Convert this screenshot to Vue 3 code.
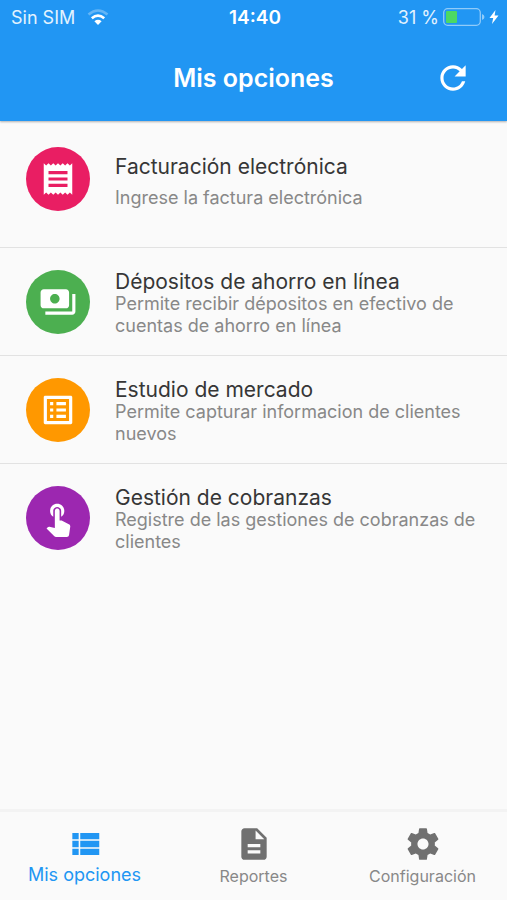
<script setup>
import { ref } from 'vue'

const options = [
  {
    title: 'Facturación electrónica',
    text: 'Ingrese la factura electrónica',
    tone: 'pink',
    roomy: true,
    path: 'M18 17H6v-2h12v2zm0-4H6v-2h12v2zm0-4H6V7h12v2zM3 22l1.5-1.5L6 22l1.5-1.5L9 22l1.5-1.5L12 22l1.5-1.5L15 22l1.5-1.5L18 22l1.5-1.5L21 22V2l-1.500 1.500L18 2l-1.500 1.500L15 2l-1.500 1.500L12 2l-1.500 1.500L9 2 7.500 3.500 6 2 4.500 3.500 3 2v20z'
  },
  {
    title: 'Dépositos de ahorro en línea',
    text: 'Permite recibir dépositos en efectivo de cuentas de ahorro en línea',
    tone: 'green',
    path: 'M19 14V6c0-1.100-.900-2-2-2H3c-1.100 0-2 .900-2 2v8c0 1.100.900 2 2 2h14c1.100 0 2-.900 2-2zm-9-1c-1.660 0-3-1.340-3-3s1.340-3 3-3 3 1.340 3 3-1.340 3-3 3zm13-6v11c0 1.100-.900 2-2 2H4v-2h17V7h2z'
  },
  {
    title: 'Estudio de mercado',
    text: 'Permite capturar informacion de clientes nuevos',
    tone: 'orange',
    path: 'M19 5v14H5V5h14m1.100-2H3.900c-.5 0-.9.400-.9.900v16.200c0 .400.400.900.900.900h16.200c.400 0 .900-.500.900-.900V3.900c0-.500-.500-.900-.900-.900zM11 7h6v2h-6V7zm0 4h6v2h-6v-2zm0 4h6v2h-6zM7 7h2v2H7zm0 4h2v2H7zm0 4h2v2H7z'
  },
  {
    title: 'Gestión de cobranzas',
    text: 'Registre de las gestiones de cobranzas de clientes',
    tone: 'purple',
    path: 'M9 11.240V7.500C9 6.120 10.120 5 11.500 5S14 6.120 14 7.500v3.740c1.210-.810 2-2.180 2-3.740C16 5.010 13.990 3 11.500 3S7 5.010 7 7.500c0 1.560.790 2.930 2 3.740zm9.840 4.630l-4.540-2.260c-.170-.070-.350-.110-.540-.110H13v-6c0-.830-.670-1.500-1.500-1.500S10 6.670 10 7.500v10.740l-3.430-.720c-.080-.010-.150-.030-.240-.030-.310 0-.590.130-.790.330l-.790.800 4.940 4.940c.270.270.650.440 1.060.440h6.790c.750 0 1.330-.550 1.440-1.280l.750-5.270c.010-.070.020-.140.020-.200 0-.620-.380-1.160-.910-1.380z'
  }
]

const tabs = [
  { label: 'Mis opciones', path: 'M4 14h4v-4H4v4zm0 5h4v-4H4v4zM4 9h4V5H4v4zm5 5h12v-4H9v4zm0 5h12v-4H9v4zM9 5v4h12V5H9z' },
  { label: 'Reportes', path: 'M14 2H6c-1.100 0-1.990.900-1.990 2L4 20c0 1.100.890 2 1.990 2H18c1.100 0 2-.900 2-2V8l-6-6zm2 16H8v-2h8v2zm0-4H8v-2h8v2zm-3-5V3.500L18.500 9H13z' },
  { label: 'Configuración', path: 'M19.430 12.980c.040-.320.070-.640.070-.980s-.030-.660-.070-.980l2.110-1.650c.190-.150.240-.420.120-.640l-2-3.460c-.120-.220-.390-.300-.610-.220l-2.490 1c-.520-.400-1.080-.730-1.690-.980l-.380-2.650C14.460 2.180 14.250 2 14 2h-4c-.250 0-.460.180-.490.420l-.380 2.650c-.610.250-1.170.590-1.690.980l-2.490-1c-.230-.090-.490 0-.610.220l-2 3.460c-.130.220-.070.490.120.640l2.110 1.650c-.040.320-.070.650-.070.980s.030.660.070.980l-2.110 1.650c-.190.150-.240.420-.120.640l2 3.460c.120.220.390.300.610.220l2.490-1c.520.400 1.080.730 1.690.980l.380 2.650c.030.240.240.420.490.420h4c.250 0 .460-.180.490-.420l.380-2.650c.610-.250 1.170-.590 1.690-.980l2.490 1c.230.090.490 0 .610-.220l2-3.460c.120-.220.070-.490-.120-.640l-2.110-1.650zM12 15.500c-1.930 0-3.500-1.570-3.500-3.500s1.570-3.500 3.500-3.500 3.500 1.570 3.500 3.500-1.570 3.500-3.500 3.500z' }
]

const active = ref(0)
</script>

<template>
  <div class="app">
    <header class="top">
      <div class="status">
        <div class="carrier">
          <span>Sin SIM</span>
          <svg class="wifi" viewBox="0 0 22 17" aria-hidden="true">
            <path d="M1.500 5.500Q11-2.500 20.500 5.500" fill="none" stroke="#fff" stroke-width="2.600" opacity=".3" />
            <path d="M4.800 9.200Q11 4 17.200 9.200" fill="none" stroke="#fff" stroke-width="2.700" />
            <path d="M7.400 12.200Q11 9.400 14.600 12.200L11 16z" fill="#fff" />
          </svg>
        </div>
        <span class="clock">14:40</span>
        <div class="power">
          <span>31 %</span>
          <svg class="battery" viewBox="0 0 42 18" aria-hidden="true">
            <rect x=".7" y=".7" width="36.600" height="16.600" rx="4" fill="none" stroke="#fff" stroke-width="1.300" opacity=".5" />
            <rect x="3" y="3" width="11" height="12" rx="1" fill="#4cd964" />
            <path d="M39 6q2.500 1 2.500 3T39 12z" fill="#fff" opacity=".5" />
          </svg>
          <svg class="bolt" viewBox="0 0 10 16" aria-hidden="true">
            <path d="M6.500 1L.5 9h3.700L3 15l6.500-8.500H5.600z" fill="#fff" />
          </svg>
        </div>
      </div>
      <div class="bar">
        <h1>Mis opciones</h1>
        <button class="refresh" type="button" aria-label="Actualizar">
          <svg class="icon" viewBox="0 0 24 24" aria-hidden="true">
            <path d="M17.650 6.350C16.200 4.900 14.210 4 12 4c-4.420 0-7.990 3.580-7.990 8s3.570 8 7.990 8c3.730 0 6.840-2.550 7.730-6h-2.080c-.820 2.330-3.040 4-5.650 4-3.310 0-6-2.690-6-6s2.690-6 6-6c1.660 0 3.140.690 4.220 1.780L13 11h7V4l-2.350 2.350z" />
          </svg>
        </button>
      </div>
    </header>

    <main>
      <ul class="list">
        <li v-for="item in options" :key="item.title">
          <a href="#" class="row" :class="{ roomy: item.roomy }" @click.prevent>
            <span class="badge" :class="item.tone">
              <svg class="icon" viewBox="0 0 24 24" aria-hidden="true"><path :d="item.path" /></svg>
            </span>
            <span class="copy">
              <span class="title">{{ item.title }}</span>
              <span class="text">{{ item.text }}</span>
            </span>
          </a>
        </li>
      </ul>
    </main>

    <nav class="tabs">
      <button
        v-for="(tab, i) in tabs"
        :key="tab.label"
        type="button"
        class="tab"
        :class="{ active: active === i }"
        @click="active = i"
      >
        <svg class="icon" viewBox="0 0 24 24" aria-hidden="true"><path :d="tab.path" /></svg>
        <span>{{ tab.label }}</span>
      </button>
    </nav>
  </div>
</template>

<style>
body {
  margin: 0;
  background: #fafafa;
}
</style>

<style scoped>
.app {
  display: flex;
  flex-direction: column;
  min-height: 100vh;
  font-family: Inter, "Liberation Sans", sans-serif;
  color: #363636;
}
.icon {
  width: 38px;
  height: 38px;
  fill: currentColor;
}
.top {
  background: #2196f3;
  color: #fff;
  box-shadow: 0 1px 2px rgba(0, 0, 0, 0.3);
}
.status {
  display: grid;
  grid-template-columns: 1fr auto 1fr;
  align-items: center;
  height: 34px;
  padding: 0 8px 0 11px;
  font-size: 18px;
}
.carrier,
.power {
  display: flex;
  align-items: center;
  color: #e3f2fe;
}
.carrier {
  gap: 12px;
}
.power {
  justify-content: flex-end;
  gap: 4px;
}
.wifi {
  width: 22px;
  height: 17px;
}
.battery {
  width: 42px;
  height: 18px;
}
.bolt {
  width: 10px;
  height: 16px;
}
.clock {
  font-size: 19px;
  font-weight: 600;
}
.bar {
  display: grid;
  grid-template-columns: 1fr auto 1fr;
  align-items: center;
  height: 87px;
  padding-right: 35px;
  padding-left: 35px;
}
h1 {
  grid-column: 2;
  margin: 0;
  font-size: 25px;
  font-weight: 600;
}
.refresh {
  display: flex;
  justify-self: end;
  padding: 0;
  border: 0;
  background: none;
  color: inherit;
}
main {
  flex: 1;
}
.list {
  margin: 0;
  padding: 4px 0 0;
  list-style: none;
}
.list li + li {
  border-top: 1px solid #e2e2e2;
}
.row {
  display: flex;
  align-items: flex-start;
  gap: 25px;
  padding: 22px 26px 18px;
  color: inherit;
  text-decoration: none;
}
.badge {
  display: flex;
  flex: none;
  align-items: center;
  justify-content: center;
  width: 64px;
  height: 64px;
  border-radius: 50%;
  color: #fff;
}
.pink { background: #e91e63; }
.green { background: #4caf50; }
.orange { background: #ff9800; }
.purple { background: #9c27b0; }
.copy {
  display: flex;
  flex: 1;
  flex-direction: column;
  min-width: 0;
}
.title {
  font-size: 21px;
  line-height: 23px;
}
.text {
  color: #888;
  font-size: 18px;
  line-height: 22px;
}
.roomy {
  padding-bottom: 36px;
}
.roomy .copy {
  gap: 9px;
  padding-top: 8px;
}
.tabs {
  display: grid;
  grid-template-columns: repeat(3, 1fr);
  height: 88px;
  border-top: 3px solid #f3f3f3;
}
.tab {
  display: flex;
  flex-direction: column;
  align-items: center;
  padding: 13px 0 0;
  border: 0;
  background: none;
  color: #707070;
  font-family: inherit;
  font-size: 16px;
  line-height: 26px;
}
.tab span {
  color: #888;
}
.tab.active,
.tab.active span {
  color: #2196f3;
}
.tab.active {
  font-size: 18px;
  line-height: 23px;
}
</style>
